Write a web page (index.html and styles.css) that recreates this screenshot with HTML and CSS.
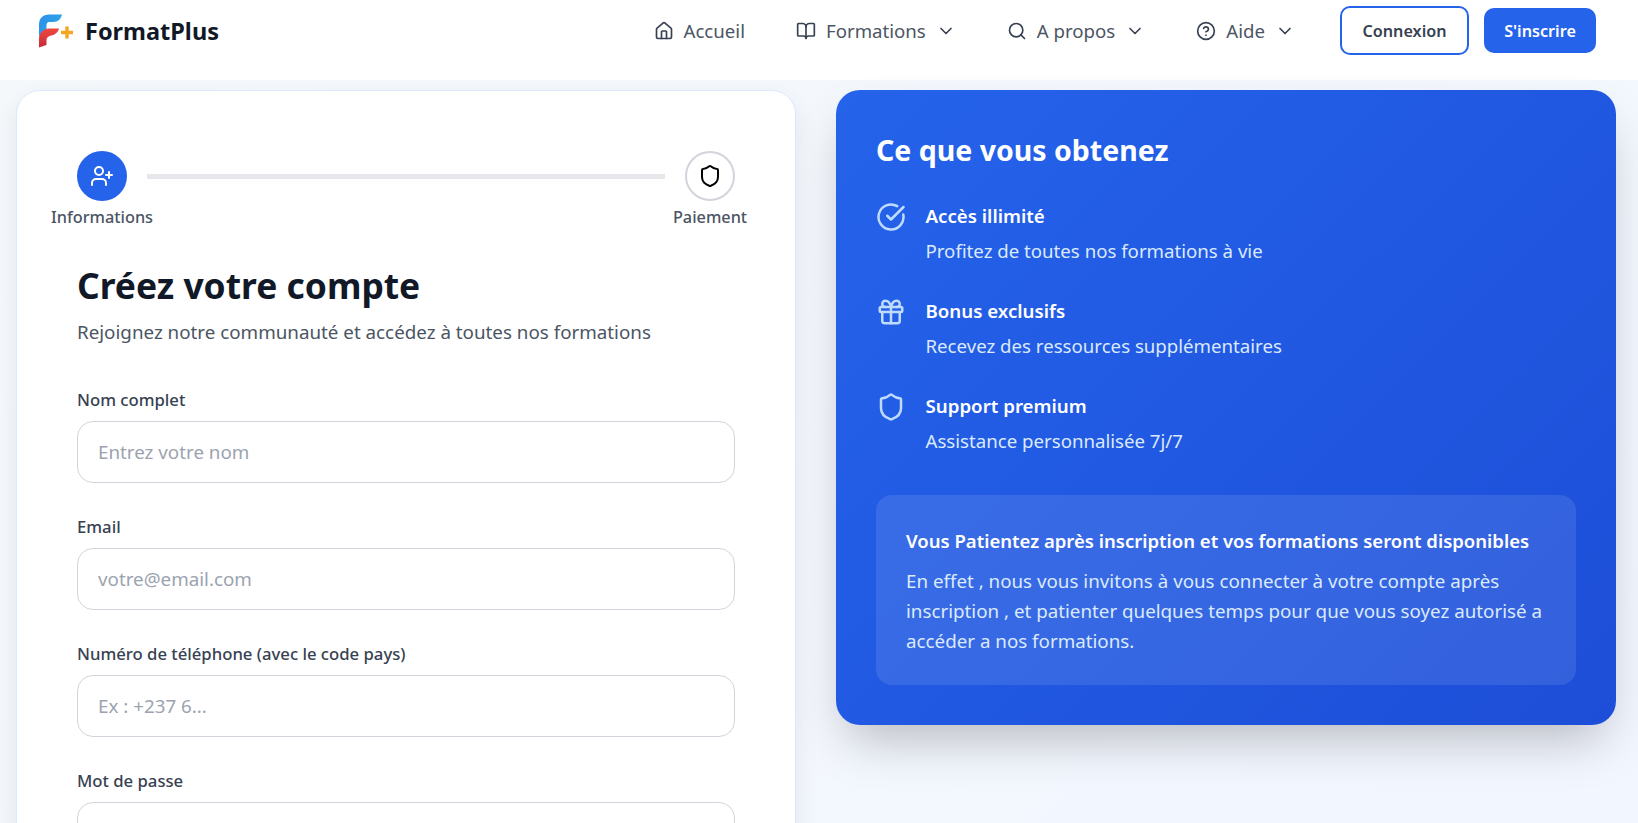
FILE: index.html
```html
<!DOCTYPE html>
<html lang="fr">
<head>
<meta charset="utf-8">
<title>FormatPlus</title>
<link rel="stylesheet" href="styles.css">
</head>
<body>
<header class="topbar">
  <a class="brand">
    <svg class="logo" viewBox="0 0 36 36" width="36" height="36">
      <defs>
        <linearGradient id="lgb" x1="0" y1="0" x2="1" y2="0.3"><stop offset="0" stop-color="#2f8fe8"/><stop offset="1" stop-color="#2aa5ea"/></linearGradient>
        <linearGradient id="lgr" x1="0" y1="0" x2="0" y2="1"><stop offset="0" stop-color="#f0483e"/><stop offset="1" stop-color="#c92a3a"/></linearGradient>
      </defs>
      <path d="M1 12C1 5 5 1.500 11 1.500H24C23 6 20 9 15 9H11C9.500 9 8.500 10.500 8.500 12V18C5 19 2 21 1 24Z" fill="url(#lgb)"/>
      <path d="M1 26C1 20 6 15.500 11 15.500H21C20 19.500 17 22 13 22.500C10 23 8.500 25 8.500 27V32L1 34.500Z" fill="url(#lgr)"/>
      <path d="M23 19.500H35M29 13.500V25.500" stroke="#f6a623" stroke-width="3.400" fill="none"/>
    </svg>
    <span class="brand-name">FormatPlus</span>
  </a>
  <nav class="nav">
    <a class="nav-item">
      <svg class="ic" viewBox="0 0 24 24"><path d="M15 21v-8a1 1 0 0 0-1-1h-4a1 1 0 0 0-1 1v8"/><path d="M3 10a2 2 0 0 1 .709-1.528l7-5.999a2 2 0 0 1 2.582 0l7 5.999A2 2 0 0 1 21 10v9a2 2 0 0 1-2 2H5a2 2 0 0 1-2-2z"/></svg>
      <span>Accueil</span>
    </a>
    <a class="nav-item">
      <svg class="ic" viewBox="0 0 24 24"><path d="M12 7v14"/><path d="M3 18a1 1 0 0 1-1-1V4a1 1 0 0 1 1-1h5a4 4 0 0 1 4 4 4 4 0 0 1 4-4h5a1 1 0 0 1 1 1v13a1 1 0 0 1-1 1h-6a3 3 0 0 0-3 3 3 3 0 0 0-3-3z"/></svg>
      <span>Formations</span>
      <svg class="ic" viewBox="0 0 24 24"><path d="m6 9 6 6 6-6"/></svg>
    </a>
    <a class="nav-item">
      <svg class="ic" viewBox="0 0 24 24"><circle cx="11" cy="11" r="8"/><path d="m21 21-4.300-4.300"/></svg>
      <span>A propos</span>
      <svg class="ic" viewBox="0 0 24 24"><path d="m6 9 6 6 6-6"/></svg>
    </a>
    <a class="nav-item">
      <svg class="ic" viewBox="0 0 24 24"><circle cx="12" cy="12" r="10"/><path d="M9.090 9a3 3 0 0 1 5.830 1c0 2-3 3-3 3"/><path d="M12 17h.01"/></svg>
      <span>Aide</span>
      <svg class="ic" viewBox="0 0 24 24"><path d="m6 9 6 6 6-6"/></svg>
    </a>
  </nav>
  <div class="auth">
    <a class="btn btn-outline">Connexion</a>
    <a class="btn btn-solid">S'inscrire</a>
  </div>
</header>

<main class="layout">
  <section class="form-card">
    <div class="steps">
      <div class="step">
        <div class="step-dot step-dot-active">
          <svg class="ic-step" viewBox="0 0 24 24"><path d="M16 21v-2a4 4 0 0 0-4-4H6a4 4 0 0 0-4 4v2"/><circle cx="9" cy="7" r="4"/><path d="M19 8v6"/><path d="M22 11h-6"/></svg>
        </div>
        <span class="step-label">Informations</span>
      </div>
      <div class="step-line"></div>
      <div class="step">
        <div class="step-dot">
          <svg class="ic-step ic-black" viewBox="0 0 24 24"><path d="M20 13c0 5-3.500 7.500-7.660 8.950a1 1 0 0 1-.67-.01C7.500 20.500 4 18 4 13V6a1 1 0 0 1 1-1c2 0 4.500-1.200 6.240-2.720a1.170 1.170 0 0 1 1.520 0C14.510 3.810 17 5 19 5a1 1 0 0 1 1 1z"/></svg>
        </div>
        <span class="step-label">Paiement</span>
      </div>
    </div>

    <h1 class="form-title">Créez votre compte</h1>
    <p class="form-sub">Rejoignez notre communauté et accédez à toutes nos formations</p>

    <form class="form">
      <div class="field">
        <label class="field-label">Nom complet</label>
        <input class="input" type="text" placeholder="Entrez votre nom">
      </div>
      <div class="field">
        <label class="field-label">Email</label>
        <input class="input" type="text" placeholder="votre@email.com">
      </div>
      <div class="field">
        <label class="field-label">Numéro de téléphone (avec le code pays)</label>
        <input class="input" type="text" placeholder="Ex : +237 6...">
      </div>
      <div class="field">
        <label class="field-label">Mot de passe</label>
        <input class="input" type="text">
      </div>
    </form>
  </section>

  <aside class="benefits">
    <h2 class="benefits-title">Ce que vous obtenez</h2>
    <div class="benefit">
      <svg class="ic-benefit" viewBox="0 0 24 24"><path d="M21.801 10A10 10 0 1 1 17 3.335"/><path d="m9 11 3 3L22 4"/></svg>
      <div>
        <h3 class="benefit-name">Accès illimité</h3>
        <p class="benefit-text">Profitez de toutes nos formations à vie</p>
      </div>
    </div>
    <div class="benefit">
      <svg class="ic-benefit" viewBox="0 0 24 24"><rect x="3" y="8" width="18" height="4" rx="1"/><path d="M12 8v13"/><path d="M19 12v7a2 2 0 0 1-2 2H7a2 2 0 0 1-2-2v-7"/><path d="M7.500 8a2.500 2.500 0 0 1 0-5A4.800 8 0 0 1 12 8a4.800 8 0 0 1 4.500-5 2.500 2.500 0 0 1 0 5"/></svg>
      <div>
        <h3 class="benefit-name">Bonus exclusifs</h3>
        <p class="benefit-text">Recevez des ressources supplémentaires</p>
      </div>
    </div>
    <div class="benefit">
      <svg class="ic-benefit" viewBox="0 0 24 24"><path d="M20 13c0 5-3.500 7.500-7.660 8.950a1 1 0 0 1-.67-.01C7.500 20.500 4 18 4 13V6a1 1 0 0 1 1-1c2 0 4.500-1.200 6.240-2.720a1.170 1.170 0 0 1 1.520 0C14.510 3.810 17 5 19 5a1 1 0 0 1 1 1z"/></svg>
      <div>
        <h3 class="benefit-name">Support premium</h3>
        <p class="benefit-text">Assistance personnalisée 7j/7</p>
      </div>
    </div>
    <div class="notice">
      <h4 class="notice-title">Vous Patientez après inscription et vos formations seront disponibles</h4>
      <p class="notice-text">En effet , nous vous invitons à vous connecter à votre compte après inscription , et patienter quelques temps pour que vous soyez autorisé a accéder a nos formations.</p>
    </div>
  </aside>
</main>
</body>
</html>
```
FILE: styles.css
```css
* { box-sizing: border-box; }
html, body { margin: 0; padding: 0; height: 823px; overflow: hidden; }
body {
  font-family: "Noto Sans", sans-serif;
  background: linear-gradient(135deg, #f5f8fb, #f2f6ff);
  color: #111827;
}
.topbar {
  height: 80px;
  background: #fff;
  display: flex;
  align-items: center;
  padding: 0 42px 19px 38px;
}
.brand { display: flex; align-items: center; gap: 11px; }
.logo { display: block; }
.brand-name { font-size: 23.5px; font-weight: 700; color: #111827; }
.nav { display: flex; align-items: center; margin-left: auto; gap: 51px; }
.nav-item { display: flex; align-items: center; gap: 10px; font-size: 18.65px; color: #4b5563; }
.ic { width: 20px; height: 20px; fill: none; stroke: #374151; stroke-width: 2; stroke-linecap: round; stroke-linejoin: round; }
.auth { display: flex; align-items: center; gap: 15px; margin-left: 45px; }
.btn { display: flex; align-items: center; justify-content: center; font-size: 16.2px; font-weight: 600; border-radius: 10px; }
.btn-outline { width: 129px; height: 49px; border: 2px solid #2563eb; color: #374151; background: #fff; }
.btn-solid { width: 112px; height: 45px; background: #2563eb; color: #fff; }

.layout { display: grid; grid-template-columns: 780px 780px; gap: 40px; padding: 10px 22px 0 16px; align-items: start; }
.form-card {
  background: #fff;
  border: 1px solid #dbeafe;
  border-radius: 24px;
  padding: 60px 60px 40px;
  box-shadow: 0 10px 25px rgba(15, 23, 42, 0.08);
  height: 900px;
}
.steps { display: flex; align-items: flex-start; }
.step { width: 50px; display: flex; flex-direction: column; align-items: center; flex: none; }
.step-dot { width: 50px; height: 50px; border-radius: 50%; border: 2px solid #d1d5db; background: #fff; display: flex; align-items: center; justify-content: center; }
.step-dot-active { background: #2563eb; border-color: #2563eb; }
.ic-step { width: 24px; height: 24px; fill: none; stroke: #fff; stroke-width: 2; stroke-linecap: round; stroke-linejoin: round; }
.ic-black { stroke: #000; }
.step-label { font-size: 16.3px; font-weight: 500; color: #4b5563; white-space: nowrap; margin-top: 5px; line-height: 22px; }
.step-line { flex: 1; height: 5px; background: #e5e7eb; margin: 23px 20px 0; }
.form-title { font-size: 35.4px; line-height: 44px; font-weight: 700; color: #111827; margin: 35px 0 11px; }
.form-sub { font-size: 18.8px; line-height: 28px; color: #4b5563; margin: 0 0 42px; }
.form { display: flex; flex-direction: column; gap: 32px; }
.field { display: flex; flex-direction: column; }
.field-label { font-size: 16.7px; font-weight: 500; color: #374151; line-height: 24px; margin-bottom: 9px; }
.input { height: 62px; width: 100%; border: 1px solid #d1d5db; border-radius: 16px; padding: 0 20px; font: inherit; font-size: 18.8px; color: #111827; background: #fff; outline: none; }
.input::placeholder { color: #9ca3af; opacity: 1; }

.benefits {
  background: linear-gradient(135deg, #2563eb, #1d4ed8);
  border-radius: 24px;
  padding: 40px;
  height: 635px;
  color: #fff;
  box-shadow: 0 25px 50px -12px rgba(0, 0, 0, 0.25);
}
.benefits-title { font-size: 28.5px; line-height: 40px; font-weight: 700; margin: 0 0 32px; }
.benefit { display: flex; gap: 19.5px; margin-bottom: 32px; }
.ic-benefit { width: 30px; height: 30px; flex: none; fill: none; stroke: #bfdbfe; stroke-width: 2; stroke-linecap: round; stroke-linejoin: round; }
.benefit-name { font-size: 18.7px; line-height: 28px; font-weight: 600; margin: 0 0 7px; }
.benefit-text { font-size: 18.65px; line-height: 28px; color: #dbeafe; margin: 0; }
.notice { margin-top: 40px; background: rgba(255,255,255,0.1); border-radius: 16px; padding: 32px 30px 29px; }
.notice-title { font-size: 18.5px; line-height: 28px; font-weight: 600; margin: 0 0 11px; }
.notice-text { font-size: 18.77px; line-height: 30px; color: #dbeafe; margin: 0; }
```
